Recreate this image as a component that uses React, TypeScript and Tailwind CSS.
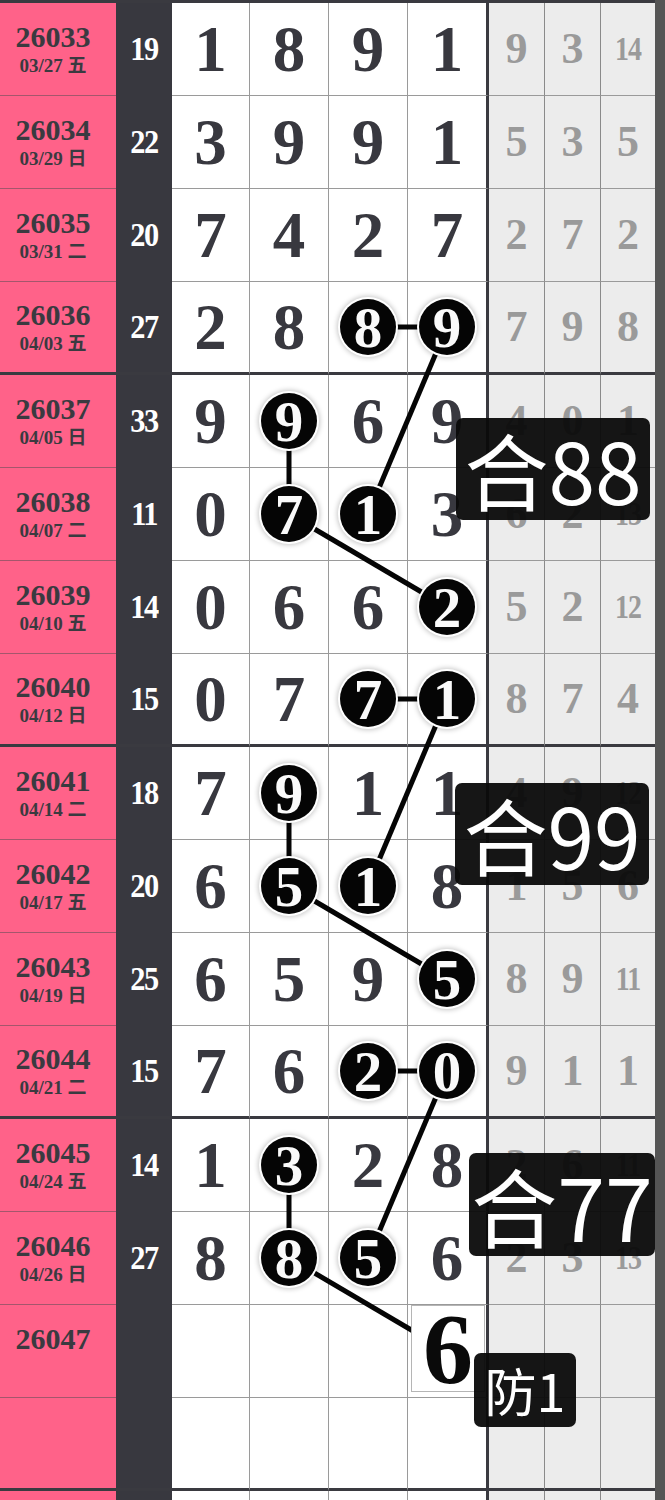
import React from "react";

type Row = {
  id: string;
  date: string;
  sum: string;
  d: string[];
  g: string[];
  c: number[];
  pred?: { col: number; val: string };
};

const rows: Row[] = [
  { id: "26033", date: "03/27 五", sum: "19", d: ["1", "8", "9", "1"], g: ["9", "3", "14"], c: [] },
  { id: "26034", date: "03/29 日", sum: "22", d: ["3", "9", "9", "1"], g: ["5", "3", "5"], c: [] },
  { id: "26035", date: "03/31 二", sum: "20", d: ["7", "4", "2", "7"], g: ["2", "7", "2"], c: [] },
  { id: "26036", date: "04/03 五", sum: "27", d: ["2", "8", "8", "9"], g: ["7", "9", "8"], c: [2, 3] },
  { id: "26037", date: "04/05 日", sum: "33", d: ["9", "9", "6", "9"], g: ["4", "0", "1"], c: [1] },
  { id: "26038", date: "04/07 二", sum: "11", d: ["0", "7", "1", "3"], g: ["6", "2", "13"], c: [1, 2] },
  { id: "26039", date: "04/10 五", sum: "14", d: ["0", "6", "6", "2"], g: ["5", "2", "12"], c: [3] },
  { id: "26040", date: "04/12 日", sum: "15", d: ["0", "7", "7", "1"], g: ["8", "7", "4"], c: [2, 3] },
  { id: "26041", date: "04/14 二", sum: "18", d: ["7", "9", "1", "1"], g: ["4", "9", "12"], c: [1] },
  { id: "26042", date: "04/17 五", sum: "20", d: ["6", "5", "1", "8"], g: ["1", "5", "6"], c: [1, 2] },
  { id: "26043", date: "04/19 日", sum: "25", d: ["6", "5", "9", "5"], g: ["8", "9", "11"], c: [3] },
  { id: "26044", date: "04/21 二", sum: "15", d: ["7", "6", "2", "0"], g: ["9", "1", "1"], c: [2, 3] },
  { id: "26045", date: "04/24 五", sum: "14", d: ["1", "3", "2", "8"], g: ["2", "6", "11"], c: [1] },
  { id: "26046", date: "04/26 日", sum: "27", d: ["8", "8", "5", "6"], g: ["2", "3", "13"], c: [1, 2] },
  { id: "26047", date: "", sum: "", d: ["", "", "", ""], g: ["", "", ""], c: [], pred: { col: 3, val: "6" } },
  { id: "", date: "", sum: "", d: ["", "", "", ""], g: ["", "", ""], c: [] },
  { id: "", date: "", sum: "", d: ["", "", "", ""], g: ["", "", ""], c: [] },
];

const cx = [210.5, 289, 368, 447];
const cy = (r: number) => 3 + 93 * r + (r % 4 === 3 ? 45 : 46);

const links: [number, number, number, number][] = [
  [3, 2, 3, 3],
  [3, 3, 5, 2],
  [4, 1, 5, 1],
  [5, 1, 6, 3],
  [7, 2, 7, 3],
  [7, 3, 9, 2],
  [8, 1, 9, 1],
  [9, 1, 10, 3],
  [11, 2, 11, 3],
  [11, 3, 13, 2],
  [12, 1, 13, 1],
  [13, 1, 14, 3],
];

const serif = "font-['Liberation_Serif','Noto_Sans_CJK_SC',serif]";
const widths = ["w-[78px]", "w-[79px]", "w-[79px]", "w-[81px]"];
const gWidths = ["w-[56px]", "w-[56px]", "w-[54px]"];

function TableRow({ r, i }: { r: Row; i: number }) {
  const end = i % 4 === 3;
  const pinkB = end ? "border-b-[3px] border-b-[#3a3a40]" : "border-b border-b-[#a5566c]";
  const whiteB = end ? "border-b-[3px] border-b-[#3a3a40]" : "border-b border-b-[#9a9a9a]";
  const darkB = end ? "border-b-[3px] border-b-[#3a3a40]" : "";
  return (
    <div className="flex h-[93px] w-[665px]">
      <div className={`w-[116px] h-full bg-[#ff6289] ${pinkB} pr-[10px] flex flex-col items-center justify-center text-[#3a3a40] font-bold ${serif}`}>
        <div className="text-[30px] leading-[30px]">{r.id || "\u00a0"}</div>
        <div className="text-[19px] leading-[20px] mt-[4px]">{r.date || "\u00a0"}</div>
      </div>
      <div className={`w-[56px] h-full bg-[#38383f] ${darkB} flex items-center justify-center text-white font-bold ${serif}`}>
        <span className="text-[33px] leading-none tracking-[-1.5px] inline-block scale-x-[0.92]">{r.sum}</span>
      </div>
      {r.d.map((v, k) => {
        const circle = r.c.includes(k);
        const right = k === 3 ? "border-r-[3px] border-r-[#3a3a40]" : "border-r border-r-[#9a9a9a]";
        const isPred = r.pred && r.pred.col === k;
        return (
          <div key={k} className={`${widths[k]} h-full bg-white ${whiteB} ${right} flex items-center justify-center font-bold ${serif}`}>
            {isPred ? (
              <div className="relative z-20 self-start ml-[2px] w-[74px] h-[87px] bg-white border border-[#b5b5b5] flex items-center justify-center">
                <span className="text-[100px] leading-none text-[#0a0a0a]">{r.pred!.val}</span>
              </div>
            ) : circle ? (
              <div className="relative z-20 w-[56px] h-[56px] rounded-full bg-[#050505] flex items-center justify-center shadow-[0_0_0_2px_#ffffff,0_0_5px_3px_rgba(0,0,0,0.22)]">
                <span className="text-[57px] leading-none text-[#fafafa]">{v}</span>
              </div>
            ) : (
              <span className="text-[65px] leading-none text-[#38383f]">{v}</span>
            )}
          </div>
        );
      })}
      {r.g.map((v, k) => {
        const right = k < 2 ? "border-r border-r-[#8a8a8a]" : "";
        return (
          <div key={k} className={`${gWidths[k]} h-full bg-[#ececec] ${whiteB} ${right} flex items-center justify-center font-bold text-[#9a9a9a] ${serif}`}>
            {v.length > 1 ? (
              <span className="text-[34px] leading-none inline-block scale-x-[0.82] tracking-[-1px]">{v}</span>
            ) : (
              <span className="text-[44px] leading-none">{v}</span>
            )}
          </div>
        );
      })}
      <div className="w-[10px] h-full bg-[#555555]" />
    </div>
  );
}

function Label({ text, className, size }: { text: string; className: string; size: string }) {
  return (
    <div
      className={`absolute z-30 bg-[#0a0a0a]/95 rounded-[7px] flex items-center justify-center text-white leading-none font-['Noto_Sans_CJK_SC','Noto_Sans',sans-serif] ${size} ${className}`}
    >
      {text}
    </div>
  );
}

export default function App() {
  return (
    <div className="relative w-[665px] h-[1500px] overflow-hidden bg-white">
      <div className="flex h-[3px] w-[665px]">
        <div className="w-[655px] h-full bg-[#3a3a40]" />
        <div className="w-[10px] h-full bg-[#555555]" />
      </div>
      {rows.map((r, i) => (
        <TableRow key={i} r={r} i={i} />
      ))}
      <svg className="absolute top-0 left-0 z-10 pointer-events-none" width={665} height={1500}>
        {links.map(([r1, c1, r2, c2], k) => (
          <line key={k} x1={cx[c1]} y1={cy(r1)} x2={cx[c2]} y2={cy(r2)} stroke="#050505" strokeWidth={5} />
        ))}
      </svg>
      <Label text="合88" size="text-[84px]" className="left-[456px] top-[418px] w-[194px] h-[102px]" />
      <Label text="合99" size="text-[84px]" className="left-[455px] top-[783px] w-[194px] h-[102px]" />
      <Label text="合77" size="text-[86px]" className="left-[469px] top-[1153px] w-[186px] h-[103px]" />
      <Label text="防1" size="text-[52px]" className="left-[474px] top-[1353px] w-[102px] h-[74px]" />
    </div>
  );
}
